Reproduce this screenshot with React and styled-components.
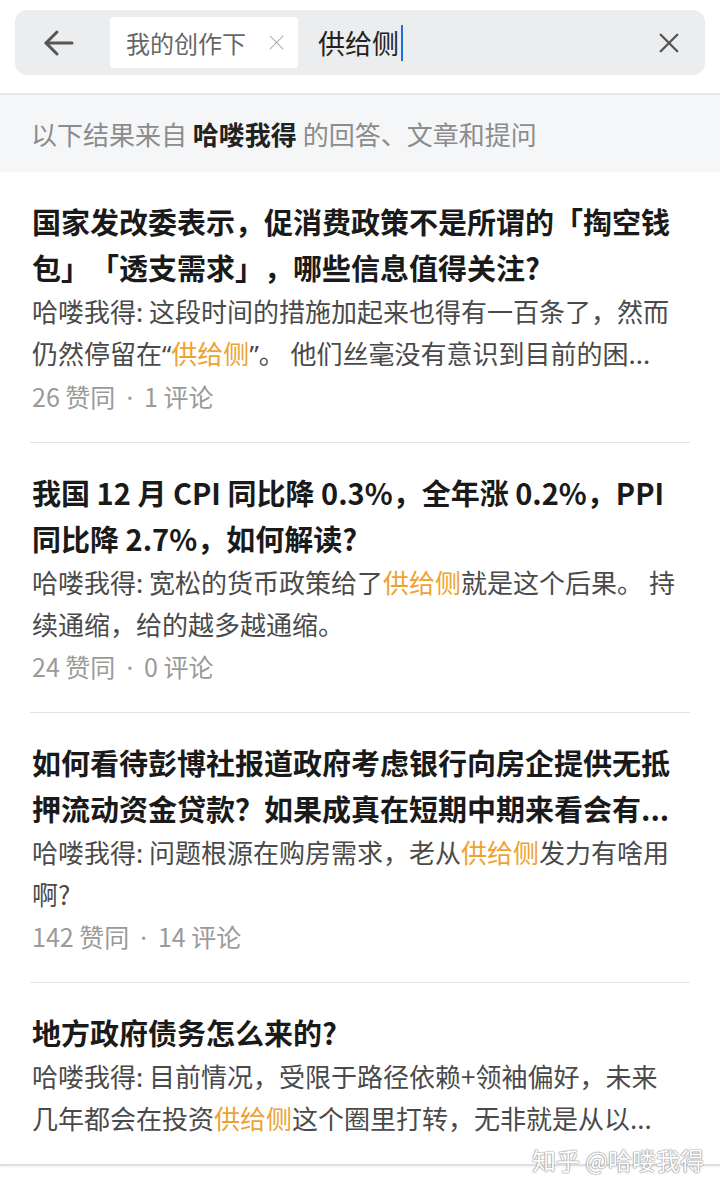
import React from "react"
import styled, { createGlobalStyle } from "styled-components"

const KEYWORD = "供给侧"

const results = [
  {
    title: ["国家发改委表示，促消费政策不是所谓的「掏空钱", "包」「透支需求」，哪些信息值得关注?"],
    excerpt: ["哈喽我得: 这段时间的措施加起来也得有一百条了，然而", "仍然停留在“供给侧”。 他们丝毫没有意识到目前的困..."],
    likes: 26,
    comments: 1,
  },
  {
    title: ["我国 12 月 CPI 同比降 0.3%，全年涨 0.2%，PPI", "同比降 2.7%，如何解读?"],
    excerpt: ["哈喽我得: 宽松的货币政策给了供给侧就是这个后果。 持", "续通缩，给的越多越通缩。"],
    likes: 24,
    comments: 0,
  },
  {
    title: ["如何看待彭博社报道政府考虑银行向房企提供无抵", "押流动资金贷款？如果成真在短期中期来看会有..."],
    excerpt: ["哈喽我得: 问题根源在购房需求，老从供给侧发力有啥用", "啊?"],
    likes: 142,
    comments: 14,
  },
  {
    title: ["地方政府债务怎么来的?"],
    excerpt: ["哈喽我得: 目前情况，受限于路径依赖+领袖偏好，未来", "几年都会在投资供给侧这个圈里打转，无非就是从以..."],
  },
]

// keyword in orange, curly quotes kept narrow like the app renders them
const highlight = text =>
  text.split(/(供给侧|[“”])/).map((part, i) => {
    if (part === KEYWORD) return <Hit key={i}>{part}</Hit>
    if (part === "“" || part === "”") return <Narrow key={i}>{part}</Narrow>
    return part
  })

const BackIcon = () => (
  <svg width="32" height="32" viewBox="0 0 32 32" fill="none" stroke="#555" strokeWidth="3" strokeLinecap="round" strokeLinejoin="round">
    <path d="M29 16H3" />
    <path d="M14 5L3 16l11 11" />
  </svg>
)

const CloseIcon = ({ size, color, width }) => (
  <svg width={size} height={size} viewBox="0 0 24 24" fill="none" stroke={color} strokeWidth={width} strokeLinecap="round">
    <path d="M3 3l18 18M21 3L3 21" />
  </svg>
)

export default function App() {
  return (
    <>
      <GlobalStyle />
      <Page>
        <SearchBar>
          <IconButton>
            <BackIcon />
          </IconButton>
          <ScopeChip>
            我的创作下
            <CloseIcon size={17} color="#b0b0b0" width={1.6} />
          </ScopeChip>
          <Query>
            供给侧
            <Caret />
          </Query>
          <ClearButton>
            <CloseIcon size={22} color="#555" width={2.6} />
          </ClearButton>
        </SearchBar>

        <Banner>
          以下结果来自 <strong>哈喽我得</strong> 的回答、文章和提问
        </Banner>

        <List>
          {results.map((item, index) => (
            <Item key={index}>
              <Title>
                {item.title.map((line, i) => (
                  <Line key={i}>{line}</Line>
                ))}
              </Title>
              <Excerpt>
                {item.excerpt.map((line, i) => (
                  <Line key={i}>{highlight(line)}</Line>
                ))}
              </Excerpt>
              {item.likes !== undefined && (
                <Meta>
                  {item.likes} 赞同<Dot>·</Dot>{item.comments} 评论
                </Meta>
              )}
            </Item>
          ))}
        </List>
        <BottomEdge />
        <Watermark>知乎 @哈喽我得</Watermark>
      </Page>
    </>
  )
}

const GlobalStyle = createGlobalStyle`
  body {
    margin: 0;
    background: #fff;
    font-family: "Noto Sans CJK SC", "Noto Sans", sans-serif;
    text-spacing-trim: space-all;
  }
`

const Page = styled.div`
  position: relative;
  width: 720px;
  height: 1189px;
  overflow: hidden;
  background: #fff;
`

const SearchBar = styled.div`
  display: flex;
  align-items: center;
  height: 65px;
  margin: 10px 15px 18px;
  padding: 0 25px 0 28px;
  background: #ecedef;
  border-radius: 12px;
`

const IconButton = styled.div`
  display: flex;
  width: 32px;
  height: 32px;
  margin-right: 35px;
`

const ScopeChip = styled.div`
  display: flex;
  align-items: center;
  gap: 22px;
  height: 51px;
  padding: 0 13px 0 16px;
  background: #fff;
  border-radius: 4px;
  color: #666;
  font-size: 24px;
`

const Query = styled.div`
  flex: 1;
  display: flex;
  align-items: center;
  margin-left: 20px;
  color: #222;
  font-size: 27px;
`

const Caret = styled.span`
  width: 2px;
  height: 36px;
  margin-left: 2px;
  background: #1f6fd8;
`

const ClearButton = styled.div`
  display: flex;
`

const Banner = styled.div`
  height: 77px;
  line-height: 77px;
  padding-left: 31px;
  border-top: 2px solid #e6e7e9;
  background: #f5f6f8;
  color: #8c8c8c;
  font-size: 26px;

  strong {
    color: #222;
    font-weight: 700;
  }
`

const List = styled.div`
  margin: 0 30px;
`

const Item = styled.div`
  padding: 26px 0 24px 2px;
  border-bottom: 1px solid #e3e3e3;

  &:last-child {
    border-bottom: none;
    padding-bottom: 25px;
  }
`

const Line = styled.div`
  white-space: nowrap;
  overflow: hidden;
`

const Title = styled.div`
  color: #1a1a1a;
  font-size: 29px;
  font-weight: 700;
  line-height: 46px;
`

const Excerpt = styled.div`
  color: #4a4a4a;
  font-size: 26px;
  line-height: 42px;
`

const Hit = styled.span`
  color: #eda332;
`

const Narrow = styled.span`
  font-family: "Noto Sans", sans-serif;
`

const Dot = styled(Narrow)`
  padding: 0 11px;
`

const Meta = styled.div`
  color: #9a9a9a;
  font-size: 25px;
  line-height: 42px;
`

const BottomEdge = styled.div`
  height: 2px;
  background: #dedede;
  box-shadow: 0 1px 3px rgba(0, 0, 0, 0.08);
`

const Watermark = styled.div`
  position: absolute;
  right: 16px;
  top: 1142px;
  color: #fff;
  font-size: 24px;
  text-shadow: 0 0 1px #888, 0 0 1px #888, 0 0 2px #aaa;
`
